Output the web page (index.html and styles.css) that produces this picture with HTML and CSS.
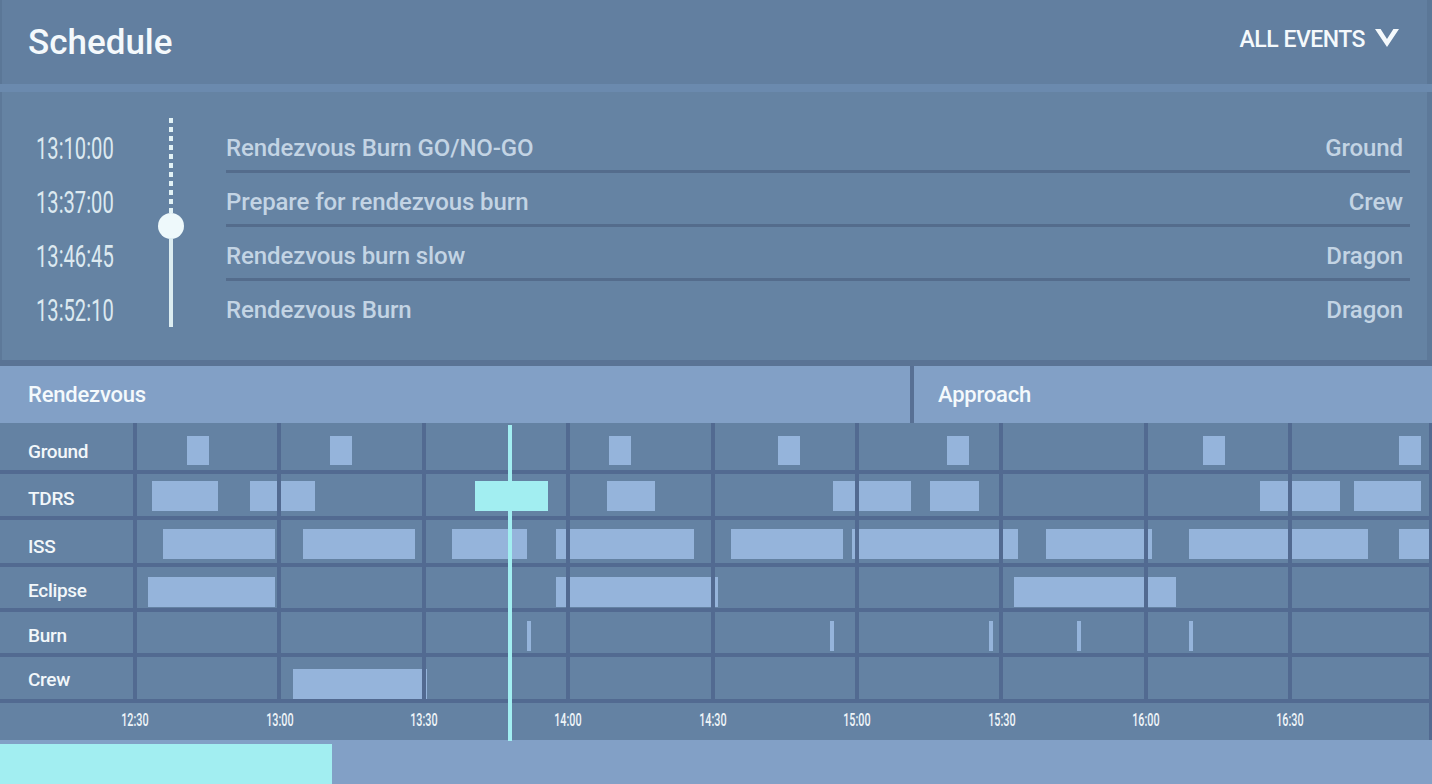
FILE: index.html
```html
<!DOCTYPE html>
<html lang="en">
<head>
<meta charset="utf-8">
<title>Schedule</title>
<link rel="stylesheet" href="styles.css">
</head>
<body>
<div class="app">
  <header class="head">
    <h1 class="title">Schedule</h1>
    <button class="filter" type="button">ALL EVENTS
      <svg class="chev" width="24" height="18" viewBox="0 0 24 18" aria-hidden="true"><polygon points="0,0 5.6,0 12,10 18.4,0 24,0 12,18"/></svg>
    </button>
  </header>

  <section class="list">
    <div class="times">
      <div class="time"><span>13:10:00</span></div>
      <div class="time"><span>13:37:00</span></div>
      <div class="time"><span>13:46:45</span></div>
      <div class="time"><span>13:52:10</span></div>
    </div>
    <div class="slider">
      <div class="dots"></div>
      <div class="knob"></div>
      <div class="rail"></div>
    </div>
    <ul class="events">
      <li class="event"><span>Rendezvous Burn GO/NO-GO</span><span>Ground</span></li>
      <li class="event"><span>Prepare for rendezvous burn</span><span>Crew</span></li>
      <li class="event"><span>Rendezvous burn slow</span><span>Dragon</span></li>
      <li class="event"><span>Rendezvous Burn</span><span>Dragon</span></li>
    </ul>
  </section>

  <div class="phases">
    <div class="phase phase-rdv">Rendezvous</div>
    <div class="phase phase-app">Approach</div>
  </div>

  <div class="timeline">
    <div class="row r-ground">
      <div class="label">Ground</div>
      <div class="track">
        <i class="bar" style="left:54px;width:22px"></i>
        <i class="bar" style="left:197px;width:22px"></i>
        <i class="bar" style="left:476px;width:22px"></i>
        <i class="bar" style="left:645px;width:22px"></i>
        <i class="bar" style="left:814px;width:22px"></i>
        <i class="bar" style="left:1070px;width:22px"></i>
        <i class="bar" style="left:1266px;width:22px"></i>
      </div>
    </div>
    <div class="row r-tdrs">
      <div class="label">TDRS</div>
      <div class="track">
        <i class="bar" style="left:19px;width:66px"></i>
        <i class="bar" style="left:117px;width:65px"></i>
        <i class="bar live" style="left:342px;width:73px"></i>
        <i class="bar" style="left:474px;width:48px"></i>
        <i class="bar" style="left:700px;width:78px"></i>
        <i class="bar" style="left:797px;width:49px"></i>
        <i class="bar" style="left:1127px;width:80px"></i>
        <i class="bar" style="left:1221px;width:67px"></i>
      </div>
    </div>
    <div class="row r-iss">
      <div class="label">ISS</div>
      <div class="track">
        <i class="bar" style="left:30px;width:112px"></i>
        <i class="bar" style="left:170px;width:112px"></i>
        <i class="bar" style="left:319px;width:75px"></i>
        <i class="bar" style="left:423px;width:138px"></i>
        <i class="bar" style="left:598px;width:112px"></i>
        <i class="bar" style="left:719px;width:166px"></i>
        <i class="bar" style="left:913px;width:106px"></i>
        <i class="bar" style="left:1056px;width:179px"></i>
        <i class="bar" style="left:1266px;width:30px"></i>
      </div>
    </div>
    <div class="row r-eclipse">
      <div class="label">Eclipse</div>
      <div class="track">
        <i class="bar" style="left:15px;width:127px"></i>
        <i class="bar" style="left:423px;width:162px"></i>
        <i class="bar" style="left:881px;width:162px"></i>
      </div>
    </div>
    <div class="row r-burn">
      <div class="label">Burn</div>
      <div class="track">
        <i class="bar" style="left:394px;width:4px"></i>
        <i class="bar" style="left:697px;width:4px"></i>
        <i class="bar" style="left:856px;width:4px"></i>
        <i class="bar" style="left:944px;width:4px"></i>
        <i class="bar" style="left:1056px;width:4px"></i>
      </div>
    </div>
    <div class="row r-crew">
      <div class="label">Crew</div>
      <div class="track">
        <i class="bar" style="left:160px;width:134px"></i>
      </div>
    </div>
    <div class="axis">
      <span class="tick"><span>12:30</span></span>
      <span class="tick"><span>13:00</span></span>
      <span class="tick"><span>13:30</span></span>
      <span class="tick"><span>14:00</span></span>
      <span class="tick"><span>14:30</span></span>
      <span class="tick"><span>15:00</span></span>
      <span class="tick"><span>15:30</span></span>
      <span class="tick"><span>16:00</span></span>
      <span class="tick"><span>16:30</span></span>
    </div>
    <div class="cursor"></div>
  </div>

  <div class="progress"><div class="fill"></div></div>
</div>
</body>
</html>
```

FILE: styles.css
```css
* { box-sizing: border-box; }

html, body {
  margin: 0;
  padding: 0;
  background: #627fa0;
}

body {
  width: 1432px;
  height: 784px;
  overflow: hidden;
  font-family: Roboto, "Liberation Sans", Arial, sans-serif;
}

.app {
  width: 1432px;
  height: 784px;
  display: flex;
  flex-direction: column;
}

/* Header */
.head {
  height: 92px;
  flex: none;
  display: flex;
  align-items: center;
  justify-content: space-between;
  padding: 0 33px 0 28px;
  background: #627fa0;
  border-bottom: 8px solid #6b8aae;
  box-shadow: inset 2px 0 0 #5b7797, inset -5px 0 0 #5b7797;
}

.title {
  margin: 0;
  font-weight: 500;
  font-size: 35px;
  line-height: 1;
  color: #f4f9fc;
}

.filter {
  display: flex;
  align-items: center;
  gap: 10px;
  padding: 0 0 6px;
  margin: 0;
  border: 0;
  background: none;
  font-family: inherit;
  font-weight: 500;
  font-size: 23px;
  line-height: 1;
  letter-spacing: -0.5px;
  color: #f4f9fc;
  cursor: pointer;
}

.chev {
  display: block;
  fill: #f4f9fc;
  margin-top: -2px;
}

/* Upcoming list */
.list {
  height: 274px;
  flex: none;
  display: flex;
  background: #6583a3;
  border-bottom: 6px solid #5a7394;
  box-shadow: inset 2px 0 0 #5d7999, inset -5px 0 0 #5d7999;
}

.times {
  width: 158px;
  flex: none;
  padding: 27px 0 0 36px;
}

.time {
  height: 54px;
  padding-top: 3px;
  display: flex;
  align-items: center;
}

.time span {
  display: inline-block;
  white-space: nowrap;
  font-size: 32px;
  line-height: 1;
  color: #dce9f0;
  transform: scaleX(0.63);
  transform-origin: left center;
}

.slider {
  width: 26px;
  flex: none;
  padding-top: 26px;
  display: flex;
  flex-direction: column;
  align-items: center;
}

.dots {
  width: 4px;
  height: 95px;
  background: repeating-linear-gradient(to bottom, #e2f2f5 0 5px, transparent 5px 9px);
}

.knob {
  width: 26px;
  height: 26px;
  flex: none;
  border-radius: 50%;
  background: #eef9fb;
}

.rail {
  width: 4px;
  height: 89px;
  margin-top: -1px;
  background: #dcedf1;
}

.events {
  flex: 1;
  list-style: none;
  margin: 0 22px 0 42px;
  padding: 27px 0 0;
}

.event {
  height: 54px;
  padding: 6px 7px 0 0;
  display: flex;
  align-items: center;
  justify-content: space-between;
  border-bottom: 3px solid #546c8c;
  font-weight: 500;
  font-size: 24px;
  line-height: 1;
  letter-spacing: -0.1px;
  color: #c3d4e4;
  white-space: nowrap;
}

.event:last-child {
  border-bottom-color: transparent;
}

/* Phases */
.phases {
  height: 57px;
  flex: none;
  display: flex;
  background: #82a0c6;
}

.phase {
  display: flex;
  align-items: center;
  font-weight: 500;
  font-size: 22px;
  line-height: 1;
  letter-spacing: -0.2px;
  color: #f4f9fc;
}

.phase-rdv {
  width: 914px;
  flex: none;
  padding-left: 28px;
  border-right: 4px solid #587094;
}

.phase-app {
  flex: 1;
  padding-left: 24px;
}

/* Timeline */
.timeline {
  position: relative;
  flex: none;
  display: flex;
  flex-direction: column;
  gap: 4px;
  padding-right: 3px;
  background: #526a91;
}

.row {
  display: flex;
  background: #6482a3;
}

.label {
  width: 133px;
  flex: none;
  padding-left: 28px;
  font-weight: 500;
  font-size: 19px;
  line-height: 20px;
  letter-spacing: -0.3px;
  color: #f2f7fa;
}

.track {
  flex: 1;
  position: relative;
}

.track::after {
  content: "";
  position: absolute;
  inset: 0;
  background: repeating-linear-gradient(90deg, #526a91 0 4px, transparent 4px 144.4px);
}

.bar {
  position: absolute;
  height: 30px;
  background: #95b4db;
}

.bar.live {
  background: #a2eef1;
}

.r-ground { height: 47px; }
.r-ground .label { padding-top: 19px; }
.r-ground .bar { top: 13px; height: 29px; }

.r-tdrs { height: 42px; }
.r-tdrs .label { padding-top: 15px; }
.r-tdrs .bar { top: 7px; }

.r-iss { height: 43px; }
.r-iss .label { padding-top: 17px; }
.r-iss .bar { top: 9px; }

.r-eclipse { height: 41px; }
.r-eclipse .label { padding-top: 14px; }
.r-eclipse .bar { top: 10px; }

.r-burn { height: 41px; }
.r-burn .label { padding-top: 14px; }
.r-burn .bar { top: 9px; }

.r-crew { height: 42px; }
.r-crew .label { padding-top: 13px; }
.r-crew .bar { top: 12px; }

.axis {
  height: 37px;
  display: flex;
  padding: 7px 0 0 62.8px;
  background: #6482a3;
}

.tick {
  flex: none;
  width: 144.4px;
  text-align: center;
  font-weight: 500;
  font-size: 18px;
  line-height: 20px;
  color: #eef4f8;
}

.tick span {
  display: inline-block;
  transform: scaleX(0.6);
}

.cursor {
  position: absolute;
  left: 508px;
  top: 2px;
  bottom: -1px;
  width: 4px;
  background: #a2eef1;
  z-index: 2;
}

/* Progress */
.progress {
  flex: 1;
  padding-top: 4px;
  background: #82a0c6;
}

.fill {
  width: 332px;
  height: 100%;
  background: #a2eef1;
}
```
